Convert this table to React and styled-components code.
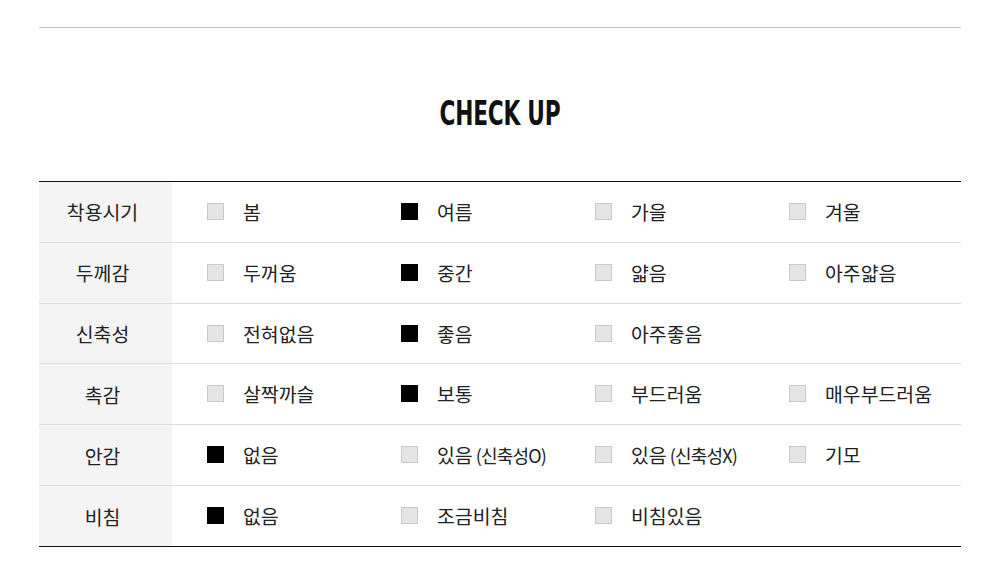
import React from "react";
import styled, { createGlobalStyle } from "styled-components";

const Global = createGlobalStyle`
  html, body { margin: 0; padding: 0; background: #fff; }
  body { font-family: "Noto Sans CJK KR", "Noto Sans", sans-serif; color: #222; }
`;

const Page = styled.div`
  width: 922px;
  margin: 0 auto;
  padding-top: 27px;
`;

const TopRule = styled.hr`
  margin: 0;
  border: 0;
  border-top: 1px solid #c4c4c4;
`;

const Title = styled.h2`
  margin: 0;
  height: 153px;
  display: flex;
  align-items: center;
  justify-content: center;
  font-family: "DejaVu Sans", sans-serif;
  font-stretch: condensed;
  font-weight: 700;
  font-size: 33px;
  letter-spacing: -0.3px;
  color: #111;
  transform: scaleX(0.73);
  padding-top: 17px;
  box-sizing: border-box;
`;

const Table = styled.div`
  border-top: 1px solid #111;
  border-bottom: 1px solid #111;
`;

const Row = styled.div`
  display: grid;
  grid-template-columns: 133px 1fr;
  height: 59.83px;
  & + & { border-top: 1px solid #dcdcdc; }
`;

const Head = styled.div`
  background: #f4f4f4;
  display: flex;
  align-items: center;
  justify-content: center;
  padding-right: 6px;
  font-size: 19.4px;
  color: #222;
`;

const Options = styled.div`
  display: grid;
  grid-template-columns: repeat(4, 194px);
  padding-left: 35px;
  align-items: center;
`;

const Option = styled.div`
  display: flex;
  align-items: center;
  gap: 19px;
  font-size: 19.4px;
  color: #222;
  white-space: nowrap;
  padding-bottom: 1px;
`;

const Box = styled.span`
  width: 17px;
  height: 17px;
  box-sizing: border-box;
  flex: none;
  background: ${(p) => (p.$on ? "#000" : "#e5e5e5")};
  border: 1px solid ${(p) => (p.$on ? "#000" : "#c9c9c9")};
`;

const Note = styled.span`
  font-size: 18px;
  letter-spacing: -0.8px;
  margin-left: 3px;
`;

const rows = [
  { head: "착용시기", items: ["봄", "여름", "가을", "겨울"], on: 1 },
  { head: "두께감", items: ["두꺼움", "중간", "얇음", "아주얇음"], on: 1 },
  { head: "신축성", items: ["전혀없음", "좋음", "아주좋음"], on: 1 },
  { head: "촉감", items: ["살짝까슬", "보통", "부드러움", "매우부드러움"], on: 1 },
  { head: "안감", items: ["없음", ["있음", "(신축성O)"], ["있음", "(신축성X)"], "기모"], on: 0 },
  { head: "비침", items: ["없음", "조금비침", "비침있음"], on: 0 },
];

export default function App() {
  return (
    <Page>
      <Global />
      <TopRule />
      <Title>CHECK UP</Title>
      <Table>
        {rows.map((r) => (
          <Row key={r.head}>
            <Head>{r.head}</Head>
            <Options>
              {r.items.map((it, i) => (
                <Option key={i}>
                  <Box $on={i === r.on} />
                  {Array.isArray(it) ? (
                    <span>
                      {it[0]}
                      <Note>{it[1]}</Note>
                    </span>
                  ) : (
                    <span>{it}</span>
                  )}
                </Option>
              ))}
            </Options>
          </Row>
        ))}
      </Table>
    </Page>
  );
}
